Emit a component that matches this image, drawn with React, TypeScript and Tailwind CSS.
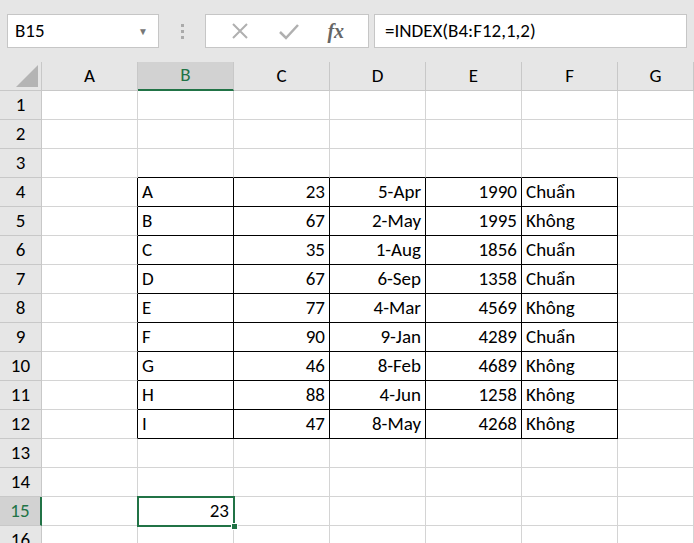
const cols = ["A", "B", "C", "D", "E", "F", "G"];
const widths = [96, 96, 96, 96, 96, 96, 76];

type Row = string[];
const data: Record<number, Row> = {
  4: ["A", "23", "5-Apr", "1990", "Chuẩn"],
  5: ["B", "67", "2-May", "1995", "Không"],
  6: ["C", "35", "1-Aug", "1856", "Chuẩn"],
  7: ["D", "67", "6-Sep", "1358", "Chuẩn"],
  8: ["E", "77", "4-Mar", "4569", "Không"],
  9: ["F", "90", "9-Jan", "4289", "Chuẩn"],
  10: ["G", "46", "8-Feb", "4689", "Không"],
  11: ["H", "88", "4-Jun", "1258", "Không"],
  12: ["I", "47", "8-May", "4268", "Không"],
};

const rows = Array.from({ length: 16 }, (_, i) => i + 1);

const Cell = ({ r, c }: { r: number; c: number }) => {
  const inTable = r >= 4 && r <= 12 && c >= 1 && c <= 5;
  const right = inTable || (c === 0 && r >= 4 && r <= 12);
  const bottom = inTable || (r === 3 && c >= 1 && c <= 5);
  const v = inTable ? data[r][c - 1] : r === 15 && c === 1 ? "23" : "";
  const left = inTable && (c === 1 || c === 5);
  const sel = r === 15 && c === 1;
  return (
    <div
      className={`relative shrink-0 h-[29px] border-r border-b px-[4px] flex items-center ${sel ? "z-10" : ""} ${left ? "justify-start" : "justify-end"} ${right ? "border-r-black" : "border-r-[#d4d4d4]"} ${bottom ? "border-b-black" : "border-b-[#d4d4d4]"}`}
      style={{ width: widths[c] }}
    >
      {v}
      {sel && (
        <div className="absolute -left-[1px] -top-[1px] w-[98px] h-[31px] border-2 border-[#217346]">
          <div className="absolute -right-[5px] -bottom-[5px] w-[7px] h-[7px] bg-[#217346] border border-white" />
        </div>
      )}
    </div>
  );
};

export default function App() {
  return (
    <div className="w-[694px] h-[543px] overflow-hidden bg-white text-black" style={{ fontFamily: "Calibri, 'Open Sans', 'Noto Sans', sans-serif" }}>
      <div className="h-[62px] bg-[#e6e6e6] flex items-center px-[7px] text-[19px]">
        <div className="w-[152px] h-[34px] bg-white border border-[#c6c6c6] flex items-center justify-between px-[7px]">
          <span>B15</span>
          <span className="text-[#777] text-[10px] mr-[3px]">▼</span>
        </div>
        <div className="w-[46px] flex justify-center">
          <div className="flex flex-col gap-[3px]">
            <div className="w-[3px] h-[3px] bg-[#aaa]" />
            <div className="w-[3px] h-[3px] bg-[#aaa]" />
            <div className="w-[3px] h-[3px] bg-[#aaa]" />
          </div>
        </div>
        <div className="w-[164px] h-[34px] bg-white border border-[#c6c6c6] flex items-center justify-around px-[10px]">
          <svg width="20" height="20" viewBox="0 0 20 20"><path d="M3 3L17 17M17 3L3 17" stroke="#b0b0b0" strokeWidth="2" /></svg>
          <svg width="22" height="20" viewBox="0 0 22 20"><path d="M2 11L8 17L20 4" stroke="#b0b0b0" strokeWidth="2.5" fill="none" /></svg>
          <span className="italic font-bold text-[#666] text-[20px]" style={{ fontFamily: "'Liberation Serif', serif" }}>fx</span>
        </div>
        <div className="ml-[5px] flex-1 h-[34px] bg-white border border-[#c6c6c6] flex items-center px-[10px]">
          =INDEX(B4:F12,1,2)
        </div>
      </div>
      <div className="flex h-[29px] bg-[#e6e6e6] text-[19px]">
        <div className="w-[42px] shrink-0 border-r border-b border-[#c8c8c8] relative">
          <svg className="absolute right-[3px] bottom-[3px]" width="22" height="22" viewBox="0 0 22 22"><path d="M22 0V22H0Z" fill="#b4b4b4" /></svg>
        </div>
        {cols.map((c, i) => (
          <div
            key={c}
            className={`shrink-0 flex items-center justify-center border-r border-[#c8c8c8] ${c === "B" ? "bg-[#d2d2d2] text-[#217346] border-b-2 border-b-[#217346]" : "border-b border-b-[#c8c8c8]"}`}
            style={{ width: widths[i] }}
          >
            {c}
          </div>
        ))}
      </div>
      {rows.map((r) => (
        <div key={r} className="flex text-[19px]">
          <div
            className={`w-[42px] h-[29px] shrink-0 flex items-center justify-center border-b border-b-[#c8c8c8] ${r === 15 ? "bg-[#d2d2d2] text-[#217346] border-r-2 border-r-[#217346]" : "bg-[#e6e6e6] border-r border-r-[#c8c8c8]"}`}
          >
            {r}
          </div>
          {cols.map((_, c) => (
            <Cell key={c} r={r} c={c} />
          ))}
        </div>
      ))}
    </div>
  );
}
